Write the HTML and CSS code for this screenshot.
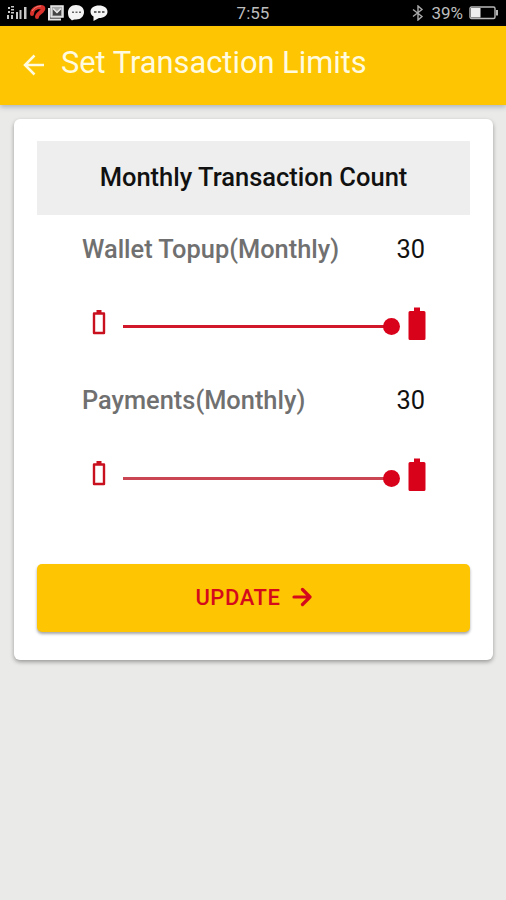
FILE: index.html
```
<!DOCTYPE html>
<html lang="en">
<head>
  <meta charset="UTF-8" />
  <meta name="viewport" content="width=device-width, initial-scale=1.0"/>
  <title>Set Transaction Limits</title>
  <link rel="stylesheet" href="styles.css">
</head>
<body>
  <div class="status-bar">
    <svg class="status-icons" width="104" height="18" viewBox="0 0 104 18">
      <!-- signal -->
      <g fill="#c8c8c8">
        <path d="M1 3h2v2H1zM4 2h3v1.500H4zM4 5h3v1.500H4zM1 7h2v2H1zM4 8h3v1.500H4zM0 11h2v4H0zM4 11h2v4H4z"/>
        <path d="M9 8h2v7H9zM12.500 6h2v9h-2zM17 3h2.500v12H17z"/>
      </g>
      <!-- carrier -->
      <path d="M25 10C25 5 30 3 34 3c3 0 3 2 1 4-2 2-5 3-5 6" fill="none" stroke="#d9322c" stroke-width="4" stroke-linecap="round"/>
      <path d="M25 7c2-3 5-5 9-5" fill="none" stroke="#f08078" stroke-width="1"/>
      <!-- mail -->
      <path d="M44 2h12v11H44z" fill="#aaa" stroke="#eee" stroke-width="1.500"/>
      <path d="M42 4v11.500h12" fill="none" stroke="#e4e4e4" stroke-width="2"/>
      <path d="M46 4l4 4 4-4v7.500h-8z" fill="#444"/>
      <path d="M46 4.500l4 4 4-4" fill="none" stroke="#eee" stroke-width="1.500"/>
      <!-- chats -->
      <path d="M69 1c5 0 8 3 8 7s-3 7.500-8 7.500c-2 0-3 0-4 1l-2-2c-1.500-1-2-4-2-6 0-4 3-7.500 8-7.500z" fill="#f4f4f4"/>
      <path d="M92 1.500c5 0 8.500 2.500 8.500 6.200S97 14 92 14L86.500 17v-4.500c-1.500-1-3-2.500-3-4.800 0-3.700 3.500-6.200 8.500-6.200z" fill="#f4f4f4"/>
      <g fill="#666">
        <path d="M65 7.500h2v1.500h-2zM68.500 7.500h2v1.500h-2zM72 7.500h2v1.500h-2z"/>
        <path d="M87 7h2.500v2H87zM91 7h2.500v2H91zM95 7h2.500v2H95z"/>
      </g>
    </svg>
    <span class="clock">7:55</span>
    <div class="status-right">
      <svg width="14" height="16" viewBox="0 0 14 16">
        <path d="M2 4.500l9 7L7 15V1l4 3.500-9 7" fill="none" stroke="#aaa" stroke-width="1.400"/>
      </svg>
      <span class="percent">39%</span>
      <svg width="30" height="14" viewBox="0 0 30 14">
        <rect x="1" y="1" width="25" height="11.500" rx="1.500" fill="none" stroke="#b8b8b8" stroke-width="1.400"/>
        <path d="M2 2h9.500v9.500H2z" fill="#eee"/>
        <path d="M27 4h2v5.500h-2z" fill="#b8b8b8"/>
      </svg>
    </div>
  </div>

  <header>
    <svg class="back" width="22" height="22" viewBox="0 0 22 22">
      <path d="M11.500 1.500L2 11l9.500 9.500M2 11h19" fill="none" stroke="#fffbe0" stroke-width="2.500"/>
    </svg>
    <h1>Set Transaction Limits</h1>
  </header>

  <main class="card">
    <h2>Monthly Transaction Count</h2>

    <div class="limit">
      <div class="limit-label">
        <span class="name">Wallet Topup(Monthly)</span>
        <span class="value">30</span>
      </div>
      <div class="slider">
        <svg class="battery-empty" width="14" height="26" viewBox="0 0 14 26">
          <path d="M2 4.500h10v19.500H2z" fill="none" stroke="#c9101f" stroke-width="2.400" stroke-linejoin="round"/>
          <path d="M4.500 1h5v3.500h-5z" fill="#c9101f"/>
        </svg>
        <div class="track"><span class="thumb"></span></div>
        <svg class="battery-full" width="18" height="34" viewBox="0 0 18 34">
          <path d="M6 .5h6V4h4q1.500 0 1.500 1.500v26q0 1.500-1.500 1.500H2Q.5 33 .5 31.500v-26Q.5 4 2 4h4z" fill="#d9021b"/>
        </svg>
      </div>
    </div>

    <div class="limit">
      <div class="limit-label">
        <span class="name">Payments(Monthly)</span>
        <span class="value">30</span>
      </div>
      <div class="slider">
        <svg class="battery-empty" width="14" height="26" viewBox="0 0 14 26">
          <path d="M2 4.500h10v19.500H2z" fill="none" stroke="#c9101f" stroke-width="2.400" stroke-linejoin="round"/>
          <path d="M4.500 1h5v3.500h-5z" fill="#c9101f"/>
        </svg>
        <div class="track track-soft"><span class="thumb"></span></div>
        <svg class="battery-full" width="18" height="34" viewBox="0 0 18 34">
          <path d="M6 .5h6V4h4q1.500 0 1.500 1.500v26q0 1.500-1.500 1.500H2Q.5 33 .5 31.500v-26Q.5 4 2 4h4z" fill="#d9021b"/>
        </svg>
      </div>
    </div>

    <button type="button" class="btn-update">
      <span>UPDATE</span>
      <svg width="20" height="20" viewBox="0 0 20 20">
        <path d="M2 10h15M10.500 2.500L18 10l-7.500 7.500" fill="none" stroke="#d40a1c" stroke-width="3.200" stroke-linecap="round" stroke-linejoin="round"/>
      </svg>
    </button>
  </main>
</body>
</html>
```

FILE: styles.css
```
* {
  margin: 0;
  padding: 0;
  box-sizing: border-box;
  font-family: Roboto, "Liberation Sans", sans-serif;
}

body {
  background-color: #eaeae8;
  color: #111;
  min-height: 100vh;
}

.status-bar {
  display: grid;
  grid-template-columns: 1fr auto 1fr;
  align-items: center;
  height: 26px;
  padding: 0 7px;
  background-color: #000;
  color: #bdbdbd;
}

.clock,
.percent {
  font-size: 17px;
  line-height: 26px;
}

.status-right {
  display: flex;
  justify-content: flex-end;
  align-items: center;
  gap: 6px;
}

header {
  display: flex;
  align-items: flex-start;
  height: 79px;
  padding: 18px 23px;
  background-color: #fdc502;
  box-shadow: 0 2px 5px rgba(80, 100, 120, 0.4);
}

.back {
  margin-top: 10px;
}

h1 {
  margin-left: 16px;
  color: #fffbe0;
  font-size: 30.8px;
  font-weight: 400;
  line-height: 37px;
}

.card {
  height: 541px;
  margin: 14px 13px 0 14px;
  padding: 22px 23px 28px;
  background-color: #fff;
  border-radius: 6px;
  box-shadow: 0 2px 4px rgba(0, 0, 0, 0.35);
}

h2 {
  height: 74px;
  background-color: #eee;
  font-size: 25.5px;
  font-weight: 500;
  line-height: 73px;
  text-align: center;
}

.limit {
  padding: 0 44px 0 45px;
}

.limit-label {
  display: flex;
  justify-content: space-between;
  height: 68px;
  padding-right: 1px;
  font-size: 25.4px;
  line-height: 69px;
}

.name {
  color: #707070;
  font-weight: 500;
}

.slider {
  display: flex;
  align-items: flex-start;
  height: 83px;
  padding-left: 10px;
}

.battery-empty {
  margin-top: 26px;
}

.track {
  position: relative;
  flex: 1;
  height: 3px;
  margin: 42px 17px 0 17px;
  background-color: #d0182a;
}

.track-soft {
  margin-top: 43px;
  background-color: #cb4653;
}

.thumb {
  position: absolute;
  right: -9px;
  top: -7px;
  width: 17px;
  height: 17px;
  border-radius: 50%;
  background-color: #d9021b;
}

.battery-full {
  margin-top: 24px;
}

.btn-update {
  display: flex;
  justify-content: center;
  align-items: center;
  gap: 11px;
  width: 100%;
  height: 68px;
  margin-top: 47px;
  padding-bottom: 2px;
  border: none;
  border-radius: 5px;
  background-color: #fdc502;
  box-shadow: 0 2px 3px rgba(0, 0, 0, 0.35);
  color: #d40a1c;
  font-size: 22px;
  font-weight: 500;
  letter-spacing: 0.6px;
}
```
